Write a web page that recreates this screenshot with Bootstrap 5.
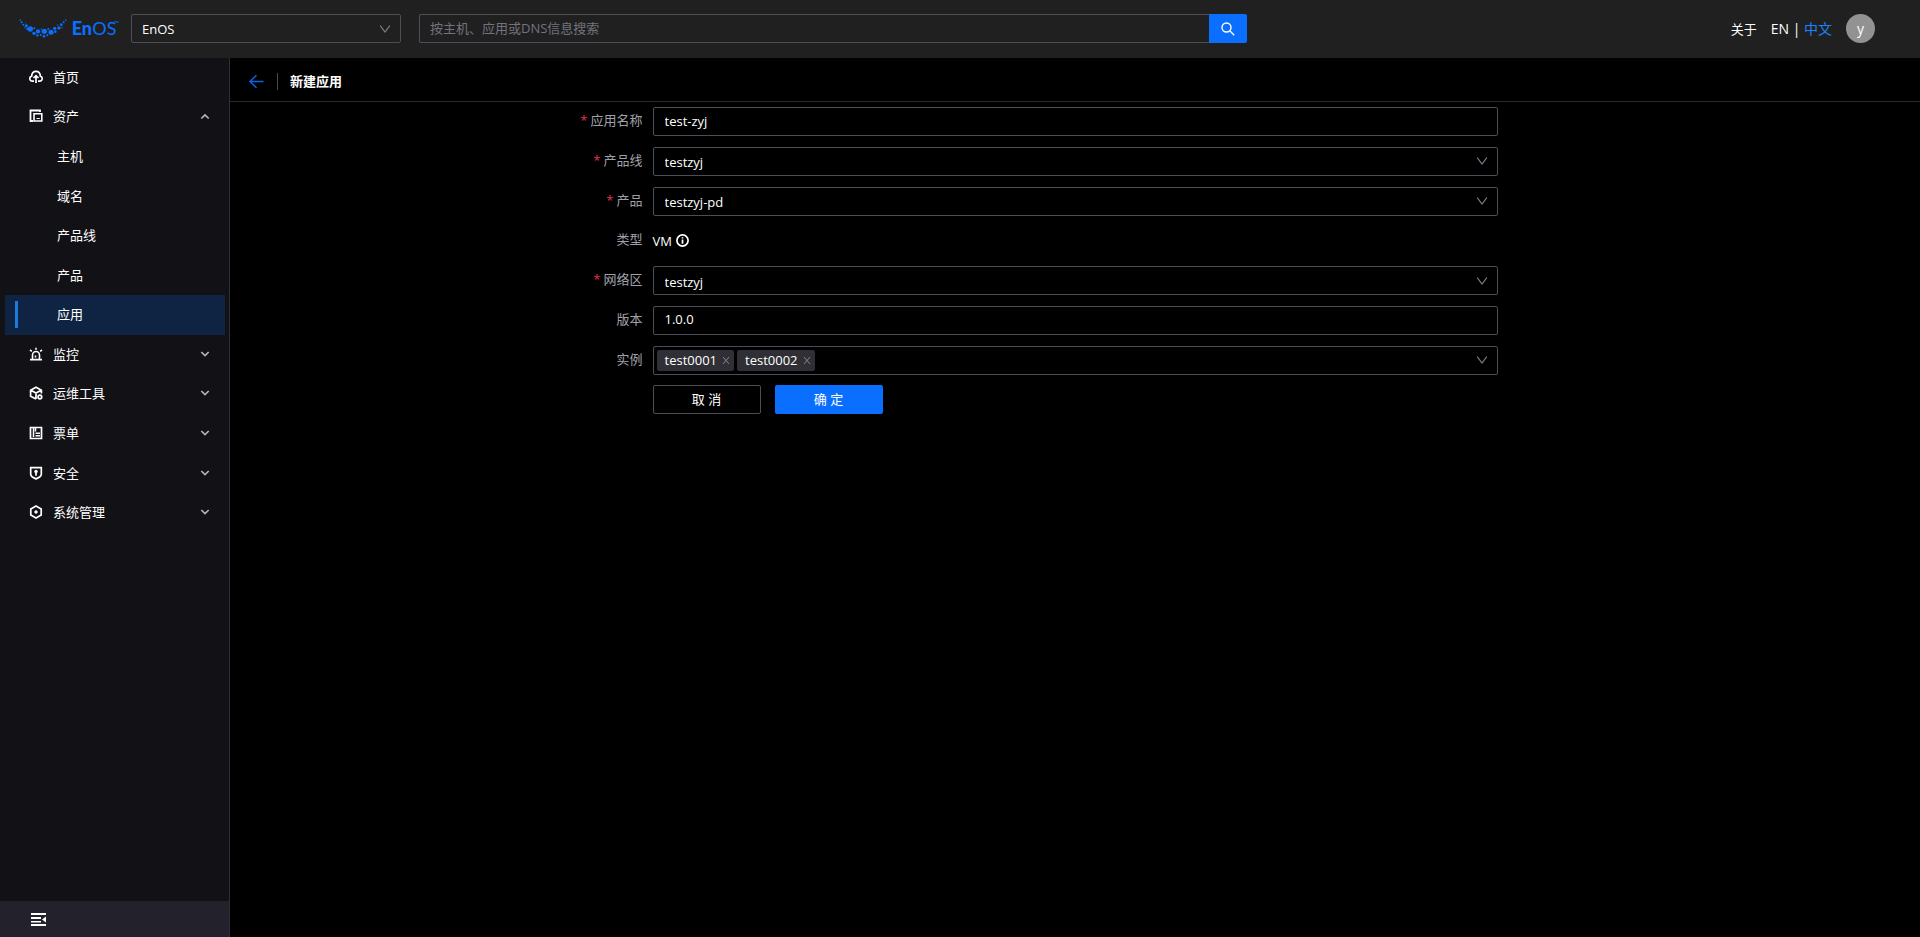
<!DOCTYPE html>
<html lang="zh-CN" data-bs-theme="dark">
<head>
<meta charset="utf-8">
<meta name="viewport" content="width=device-width, initial-scale=1">
<title>EnOS - 新建应用</title>
<link rel="stylesheet" href="https://cdn.jsdelivr.net/npm/bootstrap@5.3.0/dist/css/bootstrap.min.css">
<style>
  :root {
    --line: #4d4d57;
    --brand: #0a6fff;
  }
  body {
    font-family: "Open Sans", "Noto Sans CJK SC", sans-serif;
    font-size: 13px;
    line-height: 20px;
    color: #fff;
    background: #000;
  }
  .topbar { background: #202020; height: 58px; padding: 0 45px 1px 10px; }
  .ctl {
    height: 29px;
    min-height: 29px;
    padding: 0 11px 2px;
    font-size: 13px;
    line-height: 20px;
    color: #fff;
    background-color: transparent;
    border: 1px solid var(--line);
    border-radius: 2px;
  }
  .ctl:focus { background-color: transparent; border-color: var(--brand); box-shadow: none; }
  .ctl::placeholder { color: #73737f; opacity: 1; }
  .pick {
    padding: 2px 11px 0;
    background-image: url("data:image/svg+xml,%3csvg xmlns='http://www.w3.org/2000/svg' viewBox='0 0 12 12'%3e%3cpath fill='none' stroke='%237c7c85' stroke-width='1.2' d='M1.2 2.6 6 9l4.800-6.400'/%3e%3c/svg%3e");
    background-repeat: no-repeat;
    background-position: right 9px center;
    background-size: 12px 12px;
  }
  .site-pick { width: 270px; padding: 0 10px; }
  .finder { flex: 0 1 828px; margin-left: 18px; }
  .finder .ctl { padding-left: 10px; }
  .finder .btn { width: 38px; height: 29px; border-radius: 0 2px 2px 0; }
  .btn-brand { background: var(--brand); color: #fff; }
  .btn-brand:hover { background: #2b83ff; color: #fff; }
  .account { gap: 14px; }
  .langs { font-size: 14px; }
  .langs a.on { color: #1a82ff; }
  .avatar { width: 29px; height: 29px; background: #929292; font-size: 14px; }

  .side { width: 230px; background: #121116; border-right: 1px solid #303034; }
  .menu { display: grid; grid-auto-rows: 1fr; height: 475px; padding: 0 4px 0 5px; }
  .menu a { height: 100%; padding: 0 15px 2px 24px; color: #fff; }
  .menu a svg:first-child { margin-right: 10px; }
  .menu a.sub { padding-left: 10px; }
  .menu a.sub::before { content: ""; width: 3px; height: 27px; margin-right: 39px; }
  .menu a.on { background: #0f2443; }
  .menu a.on::before { background: #1a7bdc; }
  .fold { height: 36px; padding: 0 0 0 31px; background: #23212b; color: #fff; border: 0; }

  .crumb { height: 44px; padding: 2px 0 0 18px; border-bottom: 1px solid #2a2a2d; }
  .crumb .vr { height: 17px; margin: 2px 12px 0 13px; align-self: center; color: #4a4a50; opacity: 1; }
  .crumb h1 { font-size: 13px; line-height: 20px; font-weight: 700; }
  .sheet { display: grid; grid-auto-rows: 1fr; height: 318px; margin-top: 5px; }
  .tag-label { padding: 3px 10px 0 0; text-align: right; color: #a0a0aa; }
  .must::before { content: "*"; margin-right: 3px; color: #e5334b; }
  .tags { gap: 3px; padding: 0 3px; }
  .tag { height: 21px; padding: 0 4px 0 8px; background: #2f2f35; border-radius: 2px; }
  .tag button { width: 8px; height: 20px; margin-left: 5px; color: #85858f; }
  .acts { gap: 14px; }
  .act { width: 108px; height: 29px; padding: 0 0 2px; font-size: 13px; line-height: 20px; border-radius: 2px; }
  .btn-line { border: 1px solid var(--line); color: #fff; }
</style>
</head>
<body class="d-flex flex-column min-vh-100">

<svg class="d-none" aria-hidden="true">
  <symbol id="down" viewBox="0 0 10 10"><path d="M1.300 3 5 6.600 8.700 3" fill="none" stroke="#b4b4b8" stroke-width="1.700"/></symbol>
  <symbol id="up" viewBox="0 0 10 10"><path d="M1.300 7.500 5 3.900 8.700 7.500" fill="none" stroke="#b4b4b8" stroke-width="1.700"/></symbol>
  <symbol id="close" viewBox="0 0 8 8"><path d="m1 1 6 7M7 1 1 8" fill="none" stroke="currentColor"/></symbol>
</svg>

<header class="topbar d-flex align-items-center">
  <a href="#" class="d-flex" aria-label="EnOS">
    <svg width="121" height="40" viewBox="0 0 363 120" fill="#0a6fff">
      <circle cx="31" cy="33" r="2.500"/><circle cx="35" cy="40" r="3"/><circle cx="40" cy="47" r="3"/><circle cx="47" cy="42" r="1.500"/>
      <circle cx="49" cy="50" r="4.500"/><circle cx="44" cy="56" r="2"/><circle cx="52" cy="60" r="3.500"/><circle cx="61" cy="60" r="8"/>
      <circle cx="73" cy="58" r="3"/><circle cx="72" cy="73" r="5"/><circle cx="84" cy="67" r="6.500"/><circle cx="82" cy="79" r="3.500"/>
      <circle cx="92" cy="78" r="3"/><circle cx="94" cy="60" r="2"/><circle cx="103" cy="67" r="8"/><circle cx="102" cy="82" r="4"/>
      <circle cx="112" cy="79" r="3"/><circle cx="115" cy="60" r="3"/><circle cx="123" cy="70" r="7.500"/><circle cx="134" cy="58" r="5"/>
      <circle cx="136" cy="68" r="4"/><circle cx="147" cy="57" r="5"/><circle cx="143" cy="48" r="2"/><circle cx="154" cy="47" r="4"/>
      <circle cx="156" cy="56" r="2"/><circle cx="161" cy="40" r="3"/><circle cx="167" cy="33" r="2.500"/>
      <g font-family="Lato, sans-serif">
        <text x="185" y="78" font-size="54" font-weight="900">En</text>
        <text x="247" y="78" font-size="54" font-weight="400">OS</text>
        <text x="312" y="50" font-size="20">™</text>
      </g>
    </svg>
  </a>
  <select class="form-select ctl pick site-pick" aria-label="站点"><option>EnOS</option></select>
  <form class="finder d-flex" role="search">
    <input class="form-control ctl rounded-end-0 border-end-0" type="search" placeholder="按主机、应用或DNS信息搜索" aria-label="搜索">
    <button class="btn btn-brand p-0 border-0 flex-shrink-0" type="submit" aria-label="搜索">
      <svg class="d-block mx-auto" width="14" height="14" viewBox="0 0 14 14" fill="none" stroke="#fff" stroke-width="1.400"><circle cx="5.500" cy="5.500" r="4.500"/><path d="m8.800 8.800 4.400 4.400"/></svg>
    </button>
  </form>
  <nav class="account d-flex align-items-center ms-auto">
    <a href="#" class="text-reset text-decoration-none">关于</a>
    <div class="langs"><a href="#" class="text-reset text-decoration-none">EN</a> | <a href="#" class="on text-decoration-none">中文</a></div>
    <button type="button" class="avatar btn p-0 border-0 rounded-circle text-white">y</button>
  </nav>
</header>

<div class="d-flex flex-grow-1">
  <aside class="side d-flex flex-column flex-shrink-0">
    <ul class="menu list-unstyled mb-auto">
      <li><a href="#" class="d-flex align-items-center text-decoration-none">
        <svg width="14" height="14" viewBox="0 0 14 14" fill="none" stroke="#fff" stroke-width="1.700"><path d="M5 11.200H3.200A2.500 2.500 0 0 1 2.600 6.300C2.800 3.400 4.500 1.400 7 1.400s4.200 2 4.400 4.900a2.500 2.500 0 0 1-.6 4.900H9M7 13V6M4.500 8 7 5.600 9.500 8"/></svg>首页</a></li>
      <li><a href="#" class="d-flex align-items-center text-decoration-none">
        <svg width="14" height="14" viewBox="0 0 14 14" fill="none" stroke="#fff"><path d="M4 12H1.500V1.500h9.500V3" stroke-width="1.800"/><path d="M5 4.800h7.800V12H5z" stroke-width="1.600"/><path d="M7.500 9.500h3.300" stroke-width="1"/></svg>资产
        <svg class="ms-auto" width="10" height="10"><use href="#up"/></svg></a></li>
      <li><a href="#" class="sub d-flex align-items-center text-decoration-none">主机</a></li>
      <li><a href="#" class="sub d-flex align-items-center text-decoration-none">域名</a></li>
      <li><a href="#" class="sub d-flex align-items-center text-decoration-none">产品线</a></li>
      <li><a href="#" class="sub d-flex align-items-center text-decoration-none">产品</a></li>
      <li><a href="#" class="sub on d-flex align-items-center text-decoration-none" aria-current="page">应用</a></li>
      <li><a href="#" class="d-flex align-items-center text-decoration-none">
        <svg width="14" height="14" viewBox="0 0 14 14" fill="none" stroke="#fff" stroke-width="1.600"><path d="M1 12.600h12M3.500 12.400V8a3.500 3.500 0 0 1 7 0v4.400M7 .8v2M1 3l1.800 1.300M13 3l-1.800 1.300M6.500 10.500v-2"/></svg>监控
        <svg class="ms-auto" width="10" height="10"><use href="#down"/></svg></a></li>
      <li><a href="#" class="d-flex align-items-center text-decoration-none">
        <svg width="14" height="14" viewBox="0 0 14 14" fill="none" stroke="#fff" stroke-width="1.700"><path d="M12.400 7.500V4.200L7 1.200l-5.400 3v6L7 13M1.800 4.300 7 7l5.200-2.700M7 7v6"/><circle cx="10.900" cy="11" r="1.800"/></svg>运维工具
        <svg class="ms-auto" width="10" height="10"><use href="#down"/></svg></a></li>
      <li><a href="#" class="d-flex align-items-center text-decoration-none">
        <svg width="14" height="14" viewBox="0 0 14 14" fill="none" stroke="#fff" stroke-width="1.700"><path d="M1.500 1.500h11v11h-11z"/><path d="M4.500 2v9M6.500 2v3.500M6.500 7.200h4.500M6.500 9.800h4.500" stroke-width="1.500"/></svg>票单
        <svg class="ms-auto" width="10" height="10"><use href="#down"/></svg></a></li>
      <li><a href="#" class="d-flex align-items-center text-decoration-none">
        <svg width="14" height="14" viewBox="0 0 14 14" fill="none" stroke="#fff" stroke-width="1.700"><path d="M1.700 1.700h10.600v6.800c0 2-2.500 3.200-5.300 4.400-2.800-1.200-5.300-2.400-5.300-4.400z"/><path d="M7 5v4.800"/><circle cx="7" cy="5.500" r="1.700" fill="#fff" stroke="none"/></svg>安全
        <svg class="ms-auto" width="10" height="10"><use href="#down"/></svg></a></li>
      <li><a href="#" class="d-flex align-items-center text-decoration-none">
        <svg width="14" height="14" viewBox="0 0 14 14" fill="none" stroke="#fff" stroke-width="1.700"><path d="m7 1.100 5.200 3v5.800L7 12.900l-5.200-3V4.100z"/><circle cx="7" cy="7" r="1.700" fill="#fff" stroke="none"/></svg>系统管理
        <svg class="ms-auto" width="10" height="10"><use href="#down"/></svg></a></li>
    </ul>
    <button type="button" class="fold d-flex align-items-center" aria-label="收起菜单">
      <svg width="15" height="14" viewBox="0 0 15 14" fill="#fff"><path d="M0 1h15v2H0zM0 5h10v2H0zM0 9h10v1.500H0zM0 12h15v2H0zM15 4.500v6L11 7.500z"/></svg>
    </button>
  </aside>

  <main class="flex-grow-1">
    <div class="crumb d-flex align-items-center">
      <a href="#" class="d-flex" aria-label="返回"><svg width="16" height="16" viewBox="0 0 16 16" fill="none" stroke="#0a63e0" stroke-width="1.500"><path d="M15.500 8.500H2.200M8.500 2.200 2 8.500l6.500 6.300"/></svg></a>
      <div class="vr"></div>
      <h1 class="m-0">新建应用</h1>
    </div>
    <form class="sheet">
      <div class="row g-0">
        <label class="col-3 tag-label must" for="app">应用名称</label>
        <div class="col-6"><input id="app" type="text" class="form-control ctl" value="test-zyj"></div>
      </div>
      <div class="row g-0">
        <label class="col-3 tag-label must" for="line">产品线</label>
        <div class="col-6"><select id="line" class="form-select ctl pick"><option>testzyj</option></select></div>
      </div>
      <div class="row g-0">
        <label class="col-3 tag-label must" for="product">产品</label>
        <div class="col-6"><select id="product" class="form-select ctl pick"><option>testzyj-pd</option></select></div>
      </div>
      <div class="row g-0">
        <div class="col-3 tag-label">类型</div>
        <div class="col-6 d-flex align-items-center align-self-start ctl border-0 p-0">VM
          <svg class="ms-1" width="13" height="13" viewBox="0 0 13 13" fill="none" stroke="#fff" stroke-width="1.700" role="img" aria-label="说明"><circle cx="6.500" cy="6.500" r="5.600"/><path d="M6.500 5.500v4.200M6.500 3.200v1.400"/></svg>
        </div>
      </div>
      <div class="row g-0">
        <label class="col-3 tag-label must" for="zone">网络区</label>
        <div class="col-6"><select id="zone" class="form-select ctl pick"><option>testzyj</option></select></div>
      </div>
      <div class="row g-0">
        <label class="col-3 tag-label" for="version">版本</label>
        <div class="col-6"><input id="version" type="text" class="form-control ctl" value="1.0.0"></div>
      </div>
      <div class="row g-0">
        <div class="col-3 tag-label" id="inst">实例</div>
        <div class="col-6"><div class="form-control ctl pick tags d-flex align-items-center" role="group" aria-labelledby="inst">
          <span class="tag d-flex align-items-center">test0001<button type="button" class="btn p-0 border-0 d-flex align-items-center" aria-label="移除 test0001"><svg width="8" height="8"><use href="#close"/></svg></button></span>
          <span class="tag d-flex align-items-center">test0002<button type="button" class="btn p-0 border-0 d-flex align-items-center" aria-label="移除 test0002"><svg width="8" height="8"><use href="#close"/></svg></button></span>
        </div></div>
      </div>
      <div class="row g-0">
        <div class="col-6 offset-3 acts d-flex align-items-start">
          <button type="button" class="btn act btn-line">取 消</button>
          <button type="submit" class="btn act btn-brand border-0">确 定</button>
        </div>
      </div>
    </form>
  </main>
</div>

<script src="https://cdn.jsdelivr.net/npm/bootstrap@5.3.0/dist/js/bootstrap.bundle.min.js"></script>
</body>
</html>
